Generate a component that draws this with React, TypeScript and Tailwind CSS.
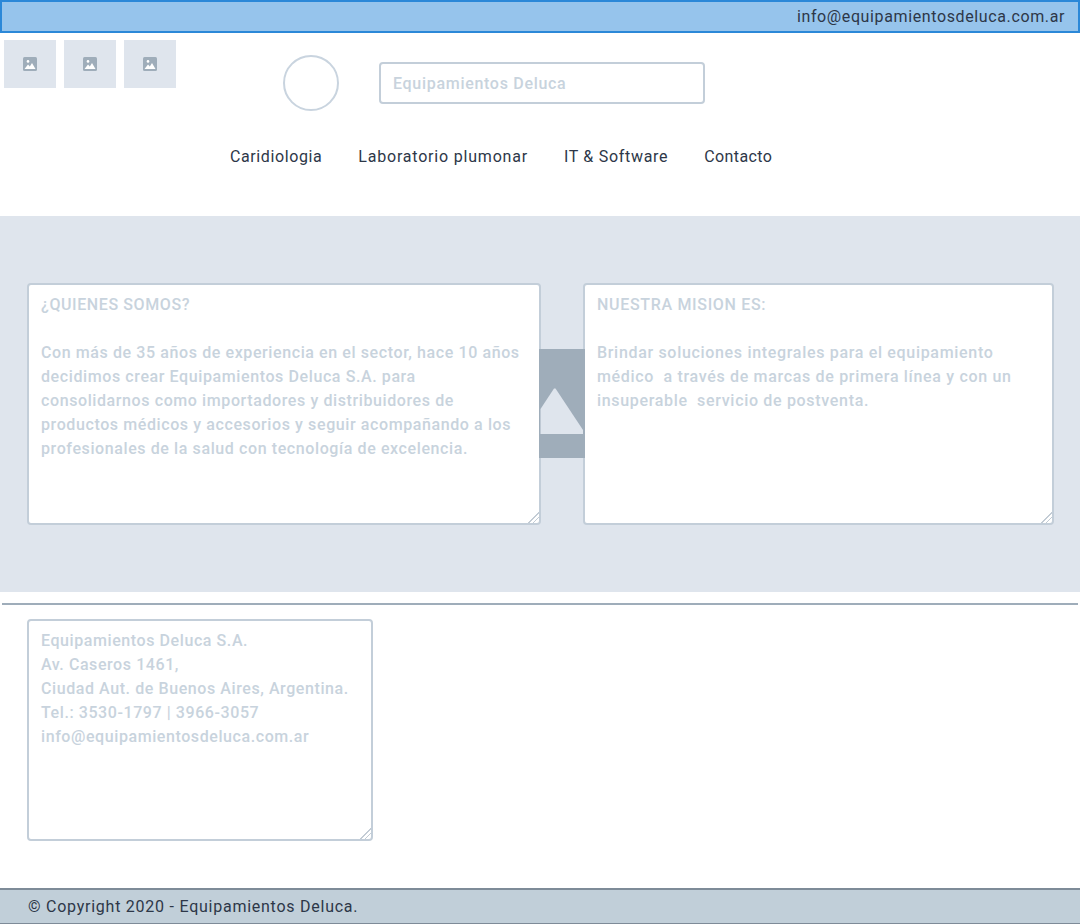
import React from 'react';

const FONT = "font-['Roboto',sans-serif]";
const BOX_CLASS = 'block resize-y rounded border-2 border-[#c3ced9] bg-white px-3 py-2 text-[16px] leading-6 font-medium outline-none placeholder:text-[#c8d3dd] placeholder:opacity-100 [&::-webkit-resizer]:bg-[linear-gradient(135deg,transparent_62%,#c3ccd5_62%,#c3ccd5_67%,transparent_67%,transparent_78%,#c3ccd5_78%,#c3ccd5_83%,transparent_83%)]';

const ImageThumb = () => (
  <div className="flex h-12 w-[52px] items-center justify-center bg-[#dfe5ed]">
    <svg width="14" height="14" viewBox="0 0 14 14">
      <rect width="14" height="14" rx="1.5" fill="#9fadba" />
      <circle cx="5" cy="4.4" r="1.3" fill="#fff" />
      <path d="M1.5 12 L5 7.5 L6.8 9.5 L9 6 L12.5 12 Z" fill="#fff" />
    </svg>
  </div>
);

const ABOUT = `¿QUIENES SOMOS?

Con más de 35 años de experiencia en el sector, hace 10 años
decidimos crear Equipamientos Deluca S.A. para
consolidarnos como importadores y distribuidores de
productos médicos y accesorios y seguir acompañando a los
profesionales de la salud con tecnología de excelencia.`;

const MISSION = `NUESTRA MISION ES:

Brindar soluciones integrales para el equipamiento
médico  a través de marcas de primera línea y con un
insuperable  servicio de postventa.`;

const CONTACT = `Equipamientos Deluca S.A.
Av. Caseros 1461,
Ciudad Aut. de Buenos Aires, Argentina.
Tel.: 3530-1797 | 3966-3057
info@equipamientosdeluca.com.ar`;

export default function App() {
  return (
    <div className={`${FONT} h-[924px] w-[1080px] overflow-hidden bg-white text-[#2d3748]`}>
      <div className="flex h-[33px] items-center justify-end border-2 border-[#2b88d8] bg-[#96c4ec] pr-[13px] text-[16px] tracking-[0.62px]">
        info@equipamientosdeluca.com.ar
      </div>

      <header className="h-[183px] pt-[7px]">
        <div className="flex">
          <div className="flex gap-2 pl-1">
            <ImageThumb />
            <ImageThumb />
            <ImageThumb />
          </div>
          <div className="ml-[107px] mt-[15px] h-14 w-14 rounded-full border-2 border-[#c9d4df]" />
          <input
            className="ml-10 mt-[22px] h-[42px] w-[326px] rounded border-2 border-[#c3ced9] bg-white px-3 text-[16px] font-medium tracking-[0.7px] outline-none placeholder:text-[#c8d3dd] placeholder:opacity-100"
            placeholder="Equipamientos Deluca"
          />
        </div>
        <nav className="mt-[34px] flex gap-9 pl-[230px] text-[16px] leading-6">
          <span className="tracking-[0.6px]">Caridiologia</span>
          <span className="tracking-[0.8px]">Laboratorio plumonar</span>
          <span className="tracking-[0.7px]">IT &amp; Software</span>
          <span className="tracking-[0.4px]">Contacto</span>
        </nav>
      </header>

      <section className="flex h-[376px] items-start bg-[#dfe5ed] pl-[27px] pt-[67px]">
        <textarea className={`${BOX_CLASS} h-[242px] w-[514px] tracking-[0.6px]`} placeholder={ABOUT} />
        <div className="relative h-[242px] w-[42px]">
          <svg className="absolute left-[-2px] top-[66px]" width="46" height="109" viewBox="0 0 46 109">
            <rect width="46" height="109" fill="#9fadba" />
            <path d="M1.5 60 L15 39.5 L16.5 39.5 L44 81 V85 H1.5 Z" fill="#dfe5ed" />
          </svg>
        </div>
        <textarea className={`${BOX_CLASS} h-[242px] w-[471px] tracking-[0.68px]`} placeholder={MISSION} />
      </section>

      <div className="mx-[2px] mt-[11px] h-[2px] bg-[#9fadba]" />

      <div className="pl-[27px] pt-[14px]">
        <textarea className={`${BOX_CLASS} h-[222px] w-[346px] tracking-[0.58px]`} placeholder={CONTACT} />
      </div>

      <footer className="mt-[47px] flex h-[37px] items-center border-y-2 border-[#7e8b98] bg-[#c1cfd9] pl-[28px] text-[16px] tracking-[0.75px]">
        © Copyright 2020 - Equipamientos Deluca.
      </footer>
    </div>
  );
}
